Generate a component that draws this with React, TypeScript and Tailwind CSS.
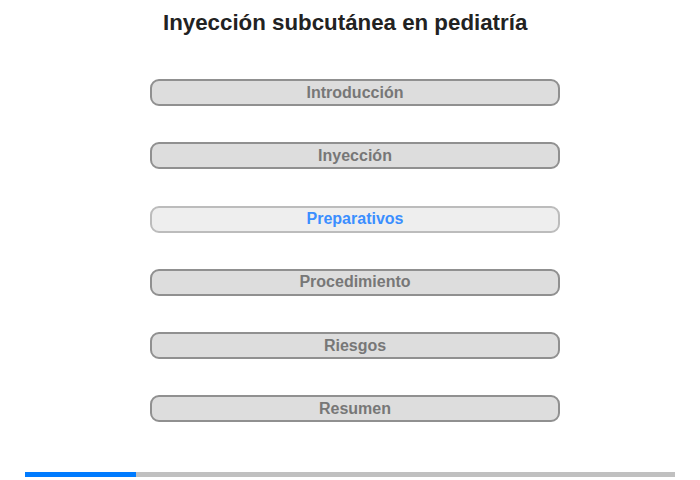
const sections = ["Introducción", "Inyección", "Preparativos", "Procedimiento", "Riesgos", "Resumen"];
const current = 2;

export default function App() {
    return (
        <div className="flex h-[480px] w-[700px] flex-col bg-white font-['Liberation_Sans',Arial,sans-serif]">
            <h1 className="mt-[9px] pl-[163px] text-[22.3px] font-bold leading-[28px] text-[#222]">
                Inyección subcutánea en pediatría
            </h1>

            <nav className="mt-[42px] flex flex-col gap-[36.3px] pl-[150px]">
                {sections.map((label, index) =>
                    index === current ? (
                        <button
                            key={label}
                            className="flex h-[27px] w-[410px] items-center justify-center rounded-[9px] border-2 border-[#bcbcbc] bg-[#eeeeee] text-[16px] font-bold text-[#3b8eff]"
                        >
                            {label}
                        </button>
                    ) : (
                        <button
                            key={label}
                            className="flex h-[27px] w-[410px] items-center justify-center rounded-[9px] border-2 border-[#909090] bg-[#dddddd] text-[16px] font-bold text-[#777777]"
                        >
                            {label}
                        </button>
                    ),
                )}
            </nav>

            <div className="mt-auto mb-[3px] ml-[25px] flex h-[5px] w-[650px] bg-[#c0c0c0]">
                <div className="h-full w-[111px] bg-[#007bff]" />
            </div>
        </div>
    );
}
